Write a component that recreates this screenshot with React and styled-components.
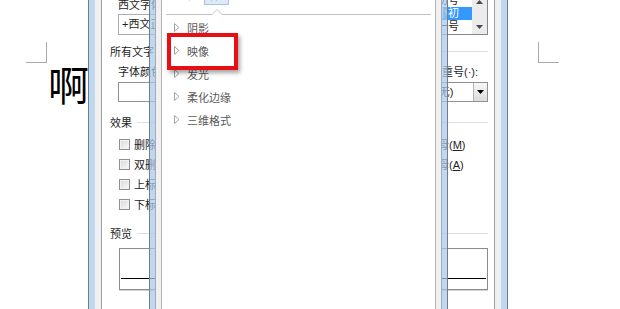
import React from "react";
import styled, { createGlobalStyle } from "styled-components";
import { PaintBucket, Sparkles, LayoutTemplate } from "lucide-react";

const GlobalStyle = createGlobalStyle`
    html, body {
        margin: 0;
        padding: 0;
        background: #ffffff;
    }
    body {
        font-family: "Liberation Sans", "Noto Sans CJK SC", sans-serif;
        font-size: 11px;
        color: #1e1e1e;
    }
`;

const UI_FONT = `"Liberation Sans", "Noto Sans CJK SC", sans-serif`;

const App = () => {
    return (
        <>
            <GlobalStyle />
            <Desktop>
                <Page>
                    <PageBody>
                        <BigChar>啊</BigChar>
                    </PageBody>
                </Page>

                <FontDialog />
                <EffectsPane />

                <Highlight />
            </Desktop>
        </>
    );
};

export default App;

const FontDialog = () => (
    <Window $left={88} $top={-69} $width={420} $height={420} $glass={6}>
        <Client $pad={6}>
            <DialogPanel>
                <TopSection>
                    <FontCol>
                        <Label>中文字体(T):</Label>
                        <TextBox>+中文正文</TextBox>
                        <Label $mt={6}>西文字体(F):</Label>
                        <TextBox>+西文正文</TextBox>
                    </FontCol>
                    <StyleCol>
                        <Label>字形(Y):</Label>
                        <TextBox>常规</TextBox>
                    </StyleCol>
                    <SizeCol>
                        <Label>字号(S):</Label>
                        <TextBox>小初</TextBox>
                        <SizeList>
                            <SizeItems>
                                <SizeItem>初号</SizeItem>
                                <SizeItem $selected>小初</SizeItem>
                                <SizeItem>一号</SizeItem>
                            </SizeItems>
                            <ScrollBar>
                                <ScrollButton>
                                    <Arrow up />
                                </ScrollButton>
                                <ScrollTrack />
                                <ScrollButton>
                                    <Arrow />
                                </ScrollButton>
                            </ScrollBar>
                        </SizeList>
                    </SizeCol>
                </TopSection>

                <GroupHeader $mt={10}>所有文字</GroupHeader>
                <FieldRow>
                    <Field $w={100}>
                        <Label>字体颜色(C):</Label>
                        <DropDown />
                    </Field>
                    <Field $w={100}>
                        <Label>下划线线型(U):</Label>
                        <DropDown value="(无)" />
                    </Field>
                    <Field $w={90}>
                        <Label>下划线颜色(I):</Label>
                        <DropDown value="自动" />
                    </Field>
                    <Field $w={57}>
                        <Label>着重号(·):</Label>
                        <DropDown value="(无)" />
                    </Field>
                </FieldRow>

                <GroupHeader $mt={14}>效果</GroupHeader>
                <EffectsGrid>
                    <Check label="删除线" keyChar="K" />
                    <Check label="小型大写字母" keyChar="M" />
                    <Check label="双删除线" keyChar="L" />
                    <Check label="全部大写字母" keyChar="A" />
                    <Check label="上标" keyChar="P" />
                    <Check label="隐藏" keyChar="H" />
                    <Check label="下标" keyChar="B" />
                </EffectsGrid>

                <GroupHeader $mt={13}>预览</GroupHeader>
                <PreviewBox>
                    <PreviewBaseline />
                </PreviewBox>
            </DialogPanel>
        </Client>
    </Window>
);

const effects = ["阴影", "映像", "发光", "柔化边缘", "三维格式"];

const EffectsPane = () => (
    <Window $left={149} $top={-40} $width={299} $height={420} $glass={5}>
        <Client $pad={5} $edge>
            <PanePanel>
                <TabRow>
                    <Tab><PaintBucket size={15} strokeWidth={1.6} /></Tab>
                    <Tab $selected><Sparkles size={15} strokeWidth={1.6} /></Tab>
                    <Tab><LayoutTemplate size={15} strokeWidth={1.6} /></Tab>
                </TabRow>
                <Separator>
                    <svg width="265" height="10" viewBox="0 0 265 10">
                        <path d="M0 9.5 H46 L51 4.5 L56 9.5 H265" fill="none" stroke="#c2c2c2" strokeWidth="1" />
                    </svg>
                </Separator>
                <EffectList>
                    {effects.map((name) => (
                        <EffectItem key={name}>
                            <svg width="6" height="9" viewBox="0 0 6 9">
                                <path d="M0.5 0.5 L5 4.5 L0.5 8.5 Z" fill="none" stroke="#a3a3a3" strokeWidth="1" />
                            </svg>
                            {name}
                        </EffectItem>
                    ))}
                </EffectList>
            </PanePanel>
        </Client>
    </Window>
);

const Check = ({ label, keyChar }) => (
    <CheckRow>
        <CheckBox />
        <span>
            {label}(<u>{keyChar}</u>)
        </span>
    </CheckRow>
);

const DropDown = ({ value }) => (
    <DropBox>
        <DropValue>{value}</DropValue>
        <DropButton>
            <Arrow dark />
        </DropButton>
    </DropBox>
);

const Arrow = ({ up, dark }) => (
    <svg width="7" height="4" viewBox="0 0 7 4">
        <path d={up ? "M0 4 L3.5 0 L7 4 Z" : "M0 0 L7 0 L3.5 4 Z"} fill={dark ? "#000" : "#4a4a4a"} />
    </svg>
);

// desktop + word page

const Desktop = styled.div`
    position: relative;
    width: 620px;
    height: 309px;
    overflow: hidden;
    background: #ffffff;
`;

const Page = styled.div`
    padding: 59px 0 0 47px;
`;

const PageBody = styled.div`
    position: relative;
    width: 491px;
    min-height: 200px;

    &::before,
    &::after {
        content: "";
        position: absolute;
        top: -21px;
        width: 20px;
        height: 20px;
        border-bottom: 1px solid #a9a9a9;
    }
    &::before {
        left: -21px;
        border-right: 1px solid #a9a9a9;
    }
    &::after {
        right: -21px;
        border-left: 1px solid #a9a9a9;
    }
`;

const BigChar = styled.div`
    font-family: "Noto Sans CJK SC", sans-serif;
    font-size: 41px;
    line-height: 41px;
    color: #000;
    margin: 4px 0 0 1px;
`;

// window chrome

const Window = styled.div`
    position: absolute;
    left: ${(p) => p.$left}px;
    top: ${(p) => p.$top}px;
    width: ${(p) => p.$width}px;
    height: ${(p) => p.$height}px;
    box-sizing: border-box;
    display: flex;
    border: 1px solid #717d8a;
    background: rgba(168, 200, 234, 0.72);
    padding: ${(p) => p.$glass}px;
`;

const Client = styled.div`
    flex: 1;
    display: flex;
    background: #f0f0f0;
    border: ${(p) => (p.$edge ? "1px solid #a4abb3" : "none")};
    padding: ${(p) => p.$pad}px;
`;

const DialogPanel = styled.div`
    flex: 1;
    background: #ffffff;
    border: 1px solid #a0a0a0;
    padding: 10px 6px 0 8px;
    font-family: ${UI_FONT};
    font-size: 11px;
    color: #1e1e1e;
`;

const PanePanel = styled.div`
    flex: 1;
    background: #ffffff;
    border: 1px solid #b4b4b4;
    font-family: ${UI_FONT};
    font-size: 11px;
`;

// dialog parts

const TopSection = styled.div`
    display: flex;
    justify-content: space-between;
`;

const FontCol = styled.div`
    width: 180px;
    padding-left: 8px;
`;

const StyleCol = styled.div`
    width: 110px;
`;

const SizeCol = styled.div`
    width: 55px;
`;

const Label = styled.div`
    height: 14px;
    line-height: 14px;
    white-space: nowrap;
    margin-top: ${(p) => p.$mt || 0}px;
`;

const TextBox = styled.div`
    box-sizing: border-box;
    margin-top: 2px;
    height: 21px;
    border: 1px solid #abadb3;
    background: #fff;
    padding: 0 3px;
    line-height: 19px;
    white-space: nowrap;
    overflow: hidden;
`;

const SizeList = styled.div`
    box-sizing: border-box;
    display: flex;
    margin-top: 1px;
    height: 42px;
    border: 1px solid #828790;
    background: #fff;
`;

const SizeItems = styled.div`
    flex: 1;
`;

const SizeItem = styled.div`
    height: 13px;
    line-height: 13px;
    padding-left: 3px;
    white-space: nowrap;
    background: ${(p) => (p.$selected ? "#3399ff" : "transparent")};
    color: ${(p) => (p.$selected ? "#ffffff" : "#1e1e1e")};
`;

const ScrollBar = styled.div`
    width: 15px;
    display: flex;
    flex-direction: column;
    background: #ebebeb;
`;

const ScrollButton = styled.div`
    height: 15px;
    display: flex;
    align-items: center;
    justify-content: center;
`;

const ScrollTrack = styled.div`
    flex: 1;
`;

const GroupHeader = styled.div`
    display: flex;
    align-items: flex-start;
    height: 14px;
    line-height: 14px;
    margin-top: ${(p) => p.$mt}px;

    &::after {
        content: "";
        flex: 1;
        height: 1px;
        margin: 6px 0 0 5px;
        background: #d7e0e8;
    }
`;

const FieldRow = styled.div`
    display: flex;
    justify-content: space-between;
    padding-left: 8px;
    margin-top: 6px;
`;

const Field = styled.div`
    display: flex;
    flex-direction: column;
    width: ${(p) => p.$w}px;
`;

const DropBox = styled.div`
    box-sizing: border-box;
    display: flex;
    margin-top: 3px;
    height: 20px;
    border: 1px solid #8f9092;
    background: #fff;
`;

const DropValue = styled.div`
    flex: 1;
    padding: 0 3px;
    line-height: 18px;
    white-space: nowrap;
    overflow: hidden;
`;

const DropButton = styled.div`
    box-sizing: border-box;
    width: 14px;
    display: flex;
    align-items: center;
    justify-content: center;
    border-left: 1px solid #b3b3b3;
    background: linear-gradient(#f7f7f7, #dcdcdc);
`;

const EffectsGrid = styled.div`
    display: grid;
    grid-template-columns: 249px 1fr;
    grid-auto-rows: 20px;
    padding-left: 9px;
    margin-top: 4px;
`;

const CheckRow = styled.div`
    display: flex;
    align-items: center;
    gap: 4px;
    white-space: nowrap;

    u {
        text-decoration: underline;
    }
`;

const CheckBox = styled.div`
    box-sizing: border-box;
    width: 11px;
    height: 11px;
    border: 1px solid #8f8f8f;
    background: linear-gradient(135deg, #d8d8d8, #f9f9f9);
    box-shadow: inset 0 0 0 1px #f2f2f2;
`;

const PreviewBox = styled.div`
    box-sizing: border-box;
    display: flex;
    flex-direction: column;
    justify-content: flex-end;
    margin: 7px 0 0 9px;
    height: 42px;
    padding: 0 1px 10px;
    border: 1px solid #8c8c8c;
    box-shadow: 0 1px 0 #d4d4d4;
`;

const PreviewBaseline = styled.div`
    height: 1px;
    background: #000;
`;

// text effects pane parts

const TabRow = styled.div`
    height: 32px;
    display: flex;
    align-items: flex-end;
    gap: 7px;
    padding-left: 10px;
`;

const Tab = styled.div`
    box-sizing: border-box;
    width: 25px;
    height: 24px;
    display: flex;
    align-items: center;
    justify-content: center;
    color: #4a4a4a;
    border: 1px solid ${(p) => (p.$selected ? "#a9c4e3" : "transparent")};
    background: ${(p) => (p.$selected ? "#dce9f6" : "transparent")};
`;

const Separator = styled.div`
    height: 10px;
    padding: 0 4px;
    svg {
        display: block;
    }
`;

const EffectList = styled.div`
    padding-top: 1px;
`;

const EffectItem = styled.div`
    height: 23px;
    display: flex;
    align-items: center;
    gap: 7px;
    padding-left: 12px;
    color: #595959;
    white-space: nowrap;
`;

const Highlight = styled.div`
    position: absolute;
    left: 167px;
    top: 33px;
    width: 71px;
    height: 37px;
    box-sizing: border-box;
    border: 4px solid #e60f16;
    box-shadow: 2px 3px 4px rgba(0, 0, 0, 0.35);
`;
